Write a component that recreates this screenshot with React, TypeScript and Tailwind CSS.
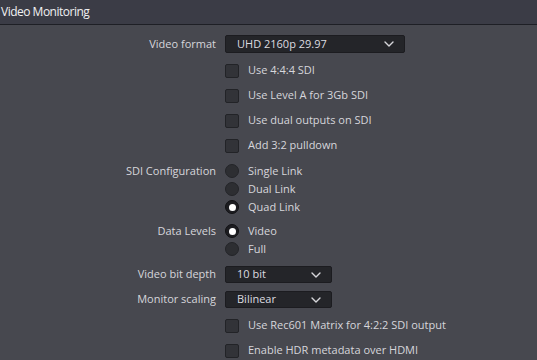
import React from 'react';

const Chevron: React.FC = () => (
  <svg width="10" height="6" viewBox="0 0 10 6" fill="none">
    <path d="M1 1l4 4 4-4" stroke="#d6d6da" strokeWidth="1.4" strokeLinecap="round" strokeLinejoin="round" />
  </svg>
);

const Dropdown: React.FC<{ value: string; width: string; height: string }> = ({ value, width, height }) => (
  <div className={`${width} ${height} flex items-center justify-between pl-[11px] pr-[10px] bg-[#242529] border border-[#1c1c20] rounded-[2px] text-[#dcdce0]`}>
    <span>{value}</span>
    <Chevron />
  </div>
);

const Checkbox: React.FC<{ label: string }> = ({ label }) => (
  <div className="flex items-center gap-[9px]">
    <div className="w-[14px] h-[14px] rounded-[2px] bg-[#323338] border border-[#222327]" />
    <span>{label}</span>
  </div>
);

const Radio: React.FC<{ label: string; checked?: boolean }> = ({ label, checked }) => (
  <div className="flex items-center gap-[9px]">
    <div className={`w-[14px] h-[14px] rounded-full flex items-center justify-center border ${checked ? 'bg-[#1d1d21] border-[#111114]' : 'bg-[#2d2e32] border-[#232428]'}`}>
      {checked && <div className="w-[7px] h-[7px] rounded-full bg-white" />}
    </div>
    <span>{label}</span>
  </div>
);

const Row: React.FC<{ label?: string; className: string; children: React.ReactNode }> = ({ label, className, children }) => (
  <div className={`flex items-center ${className}`}>
    <div className="w-[216px] text-right">{label}</div>
    <div className="ml-[9px] flex items-center">{children}</div>
  </div>
);

const App: React.FC = () => {
  return (
    <div className="w-[537px] h-[360px] overflow-hidden bg-[#47484f] text-[11px] text-[#d6d6db]" style={{ fontFamily: '"Open Sans", "Liberation Sans", sans-serif' }}>
      <div className="h-[25px] flex items-center pl-[1px] bg-[#3b3c46] border-b border-[#1e1f25] text-[12px] tracking-[-0.5px] font-medium text-[#f0f0f2]">
        Video Monitoring
      </div>
      <div className="flex flex-col">
        <Row label="Video format" className="mt-[10px] h-[18px]">
          <Dropdown value="UHD 2160p 29.97" width="w-[180px]" height="h-[18px]" />
        </Row>
        <Row className="mt-[5px] h-[25px]"><Checkbox label="Use 4:4:4 SDI" /></Row>
        <Row className="h-[25px]"><Checkbox label="Use Level A for 3Gb SDI" /></Row>
        <Row className="h-[25px]"><Checkbox label="Use dual outputs on SDI" /></Row>
        <Row className="h-[25px]"><Checkbox label="Add 3:2 pulldown" /></Row>
        <Row label="SDI Configuration" className="mt-[4px] h-[18px]"><Radio label="Single Link" /></Row>
        <Row className="h-[18px]"><Radio label="Dual Link" /></Row>
        <Row className="h-[18px]"><Radio label="Quad Link" checked /></Row>
        <Row label="Data Levels" className="mt-[6px] h-[18px]"><Radio label="Video" checked /></Row>
        <Row className="h-[18px]"><Radio label="Full" /></Row>
        <Row label="Video bit depth" className="mt-[8px] h-[17px]">
          <Dropdown value="10 bit" width="w-[107px]" height="h-[17px]" />
        </Row>
        <Row label="Monitor scaling" className="mt-[8px] h-[17px]">
          <Dropdown value="Bilinear" width="w-[107px]" height="h-[17px]" />
        </Row>
        <Row className="mt-[5px] h-[25px]"><Checkbox label="Use Rec601 Matrix for 4:2:2 SDI output" /></Row>
        <Row className="h-[25px]"><Checkbox label="Enable HDR metadata over HDMI" /></Row>
      </div>
    </div>
  );
};

export default App;
